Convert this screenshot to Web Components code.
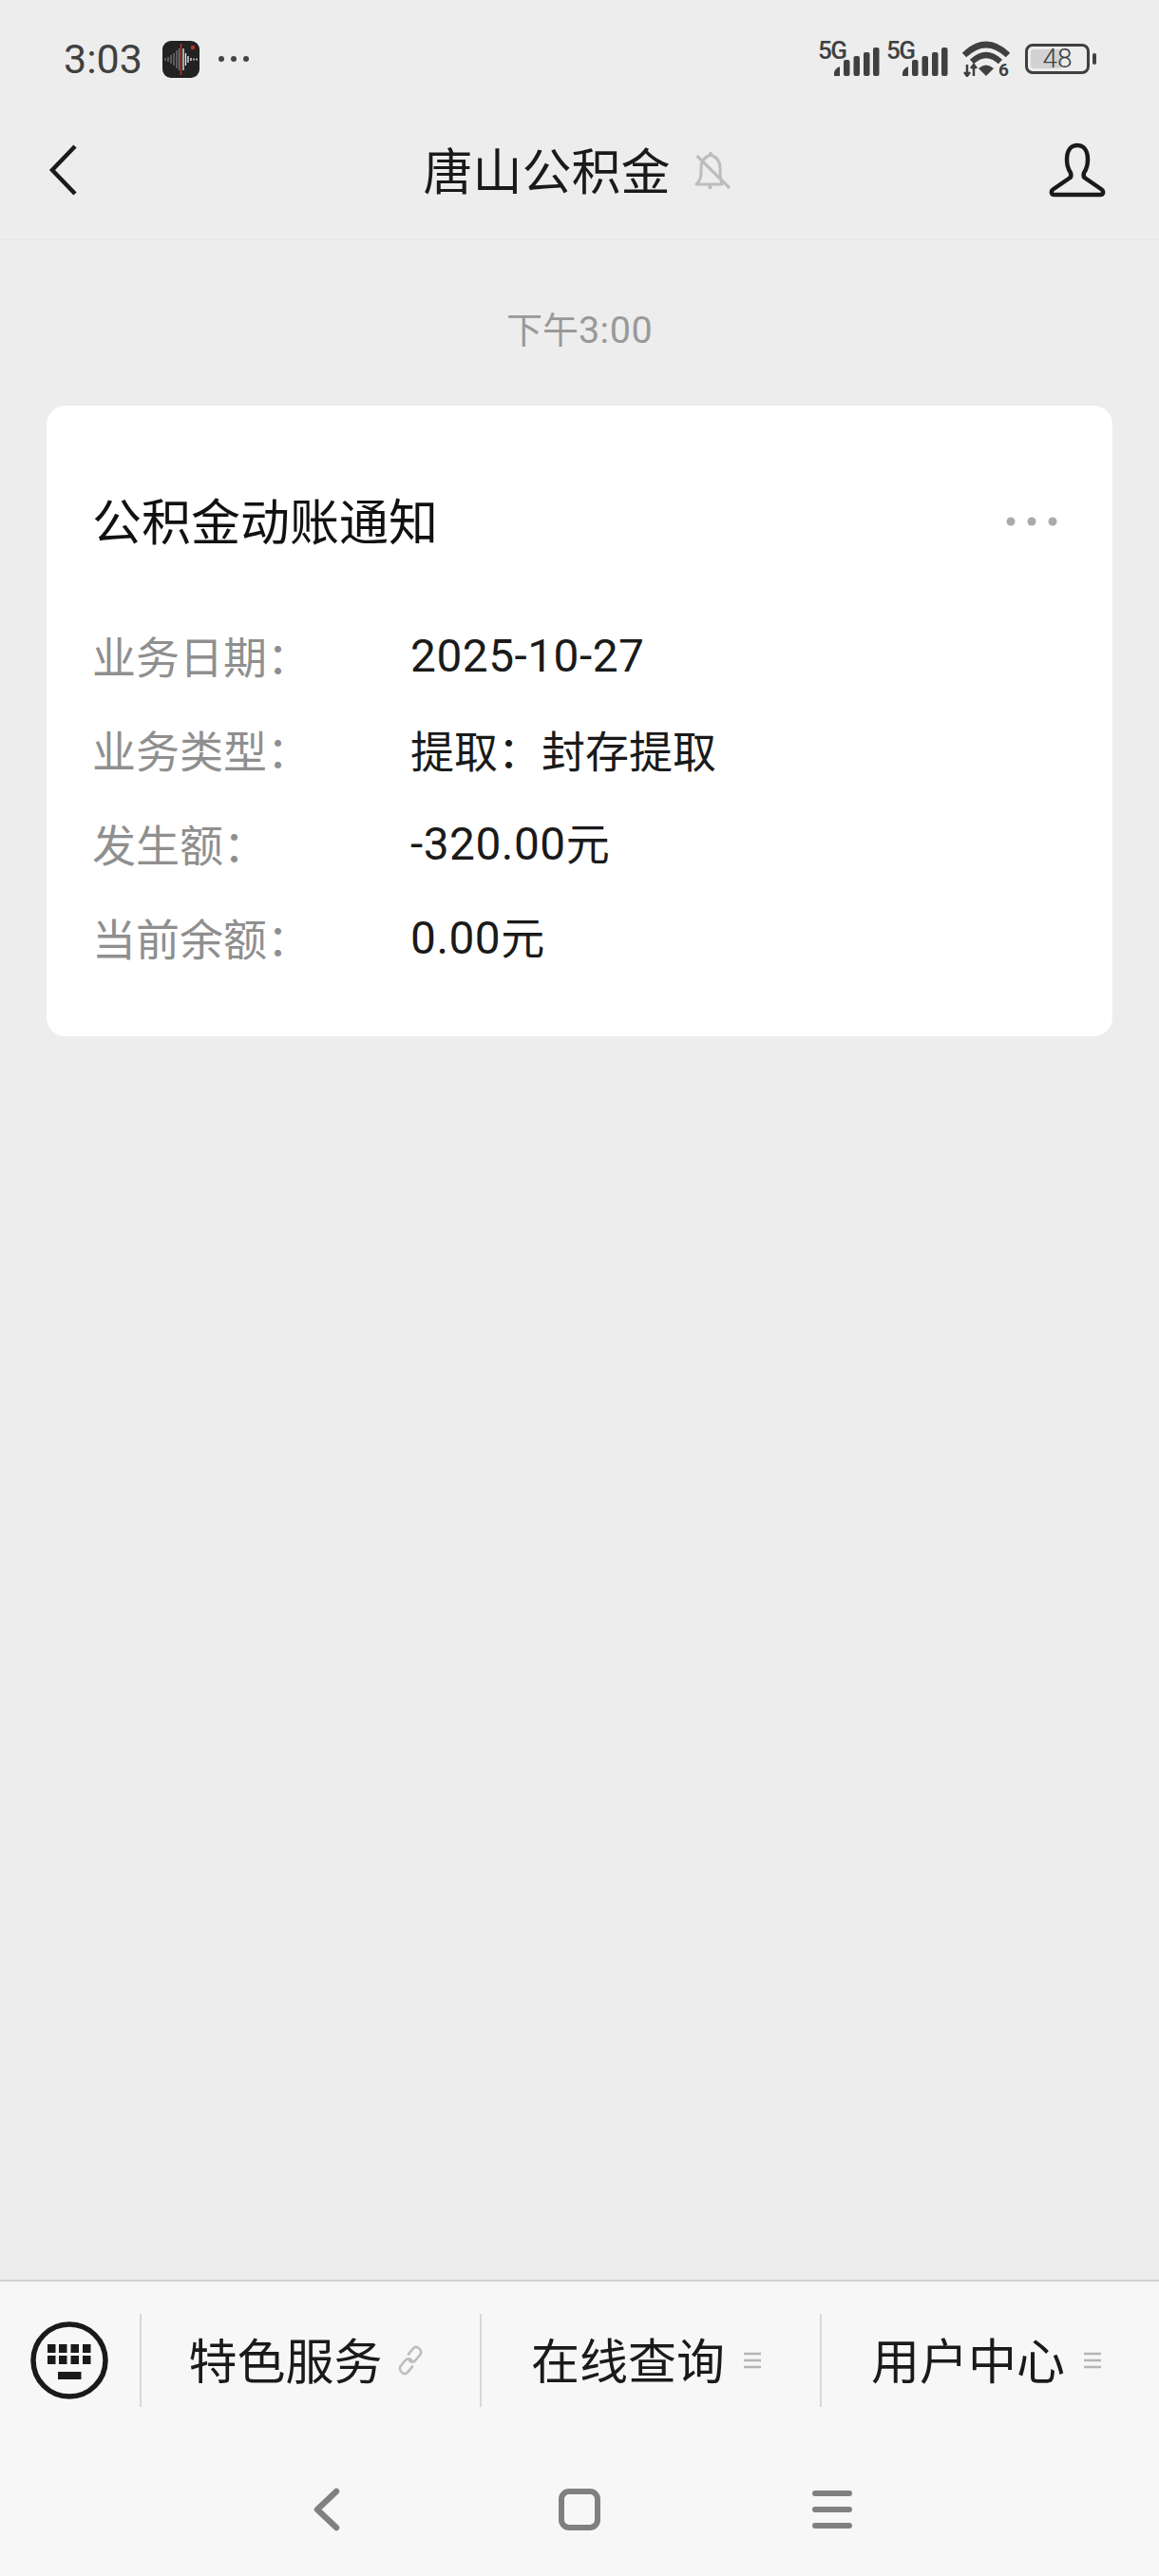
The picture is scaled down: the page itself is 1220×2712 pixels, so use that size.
<!DOCTYPE html>
<html lang="zh-CN">
<head>
<meta charset="utf-8">
<title>唐山公积金</title>
<style>
  html, body { margin: 0; padding: 0; }
  body {
    width: 1220px;
    height: 2712px;
    overflow: hidden;
    display: flex;
    flex-direction: column;
    background: #ededed;
    font-family: "Noto Sans CJK SC", sans-serif;
  }
</style>
</head>
<body>
  <phone-status-bar></phone-status-bar>
  <chat-header title="唐山公积金"></chat-header>
  <chat-thread>
    <chat-time>下午<num-text>3:00</num-text></chat-time>
    <notice-card heading="公积金动账通知">
      <notice-row label="业务日期："><num-text>2025-10-27</num-text></notice-row>
      <notice-row label="业务类型：">提取：封存提取</notice-row>
      <notice-row label="发生额："><num-text>-320.00</num-text>元</notice-row>
      <notice-row label="当前余额："><num-text>0.00</num-text>元</notice-row>
    </notice-card>
  </chat-thread>
  <menu-bar>
    <menu-tab icon="link">特色服务</menu-tab>
    <menu-tab icon="list">在线查询</menu-tab>
    <menu-tab icon="list">用户中心</menu-tab>
  </menu-bar>
  <system-nav></system-nav>

<script>
const signalBars = `
  <svg width="49" height="30" viewBox="0 0 49 30" fill="#404040">
    <path d="M1 30v-3q0-4 6-7v10z"/>
    <rect x="11" y="13" width="6.500" height="17" rx="2"/>
    <rect x="21.500" y="9" width="6.500" height="21" rx="2"/>
    <rect x="32" y="5" width="6.500" height="25" rx="2"/>
    <rect x="42" y="0" width="6.500" height="30" rx="2"/>
  </svg>`;

const statusTemplate = document.createElement("template");
statusTemplate.innerHTML = `
  <style>
    :host {
      display: flex;
      justify-content: space-between;
      align-items: center;
      height: 124px;
      margin-bottom: -18px;
      box-sizing: border-box;
      padding: 0 66px 0 67px;
      color: #404040;
      font-family: Roboto, sans-serif;
    }
    .left, .right { display: flex; align-items: center; }
    .time { font-size: 43px; line-height: 50px; }
    .app { margin-left: 21px; display: block; }
    .more { margin-left: 20px; display: block; }
    .signal { position: relative; width: 65px; height: 36px; margin-right: 7px; }
    .signal b { position: absolute; left: 0; top: -1px; font-size: 26px; line-height: 20px; font-weight: 500; letter-spacing: -1.500px; }
    .signal svg { position: absolute; right: 0; bottom: 0; }
    .wifi { position: relative; width: 50px; height: 38px; margin: 0 16px 0 8px; }
    .wifi svg { display: block; }
    .wifi i { position: absolute; right: 1px; bottom: -2px; font: 700 19px/18px Roboto, sans-serif; }
    .battery { display: flex; align-items: center; }
    .shell {
      position: relative;
      width: 68px;
      height: 32px;
      box-sizing: border-box;
      border: 3px solid #404040;
      border-radius: 8px;
      overflow: hidden;
      text-align: center;
    }
    .shell::before { content: ""; position: absolute; left: 3px; top: 3px; bottom: 3px; width: 33px; background: #d2d2d2; border-radius: 3px; }
    .shell span { position: relative; font-size: 28px; line-height: 26px; font-weight: 300; display: block; }
    .nub { width: 4px; height: 12px; margin-left: 3px; background: #404040; border-radius: 2px; }
  </style>
  <div class="left">
    <span class="time">3:03</span>
    <svg class="app" width="39" height="39" viewBox="0 0 39 39">
      <rect width="39" height="39" rx="9" fill="#222"/>
      <path d="M3 18v3M6 17v5M9 15v9M12 13v13M15 10v19M17.500 8v23" stroke="#8a8a8a" stroke-width="1.100"/>
      <path d="M22 8v23M24.500 13v13M27 16v7M30 18v3M33 18.500v2M36 18.500v2" stroke="#eee" stroke-width="1.300"/>
      <path d="M19.500 3v33" stroke="#b03a30" stroke-width="1.500"/>
      <circle cx="32" cy="7" r="2.200" fill="#b03a30"/>
    </svg>
    <svg class="more" width="32" height="6" viewBox="0 0 32 6" fill="#444">
      <circle cx="3" cy="3" r="3"/><circle cx="16" cy="3" r="3"/><circle cx="29" cy="3" r="3"/>
    </svg>
  </div>
  <div class="right">
    <div class="signal"><b>5G</b>${signalBars}</div>
    <div class="signal"><b>5G</b>${signalBars}</div>
    <div class="wifi">
      <svg width="50" height="38" viewBox="0 0 50 38" fill="none" stroke="#404040">
        <path d="M2 15Q25 -7 48 15" stroke-width="6.500"/>
        <path d="M10 22Q25 8 40 22" stroke-width="6"/>
        <path d="M17 29Q25 22 33 29L25 37Z" fill="#404040" stroke="none"/>
        <path d="M5 25v12M2 33l3 4 3-4M12 37v-12M9 29l3-4 3 4" stroke-width="2.500"/>
      </svg>
      <i>6</i>
    </div>
    <div class="battery">
      <div class="shell"><span>48</span></div>
      <div class="nub"></div>
    </div>
  </div>
`;

class PhoneStatusBar extends HTMLElement {
  constructor() {
    super();
    this.attachShadow({ mode: "open" });
    this.shadowRoot.appendChild(statusTemplate.content.cloneNode(true));
  }
}
customElements.define("phone-status-bar", PhoneStatusBar);

const headerTemplate = document.createElement("template");
headerTemplate.innerHTML = `
  <style>
    :host {
      display: flex;
      align-items: center;
      justify-content: space-between;
      height: 147px;
      box-sizing: border-box;
      padding: 0 56px 0 51px;
      border-bottom: 1px solid #e6e6e6;
      color: #1a1a1a;
    }
    .middle { display: flex; align-items: center; gap: 25px; margin-left: 27px; }
    .title { font-size: 52px; line-height: 70px; margin-top: -3px; }
    svg { display: block; }
  </style>
  <svg width="32" height="54" viewBox="0 0 32 54" fill="none" stroke="#1a1a1a" stroke-width="4.500">
    <path d="M28 2L4 27l24 25"/>
  </svg>
  <div class="middle">
    <span class="title"></span>
    <svg width="38" height="42" viewBox="0 0 38 42" fill="none" stroke="#bdbdbd" stroke-width="3" stroke-linejoin="round">
      <path d="M2 36c3-3 5-7 5-12v-5c0-7 4-12 10-14 6 2 10 7 10 14v5c0 5 1 9 2 12z"/>
      <path d="M2.500 6L37 40" stroke-width="3.200"/>
      <circle cx="17" cy="3.500" r="1.800" fill="#bdbdbd" stroke="none"/>
      <circle cx="16.500" cy="39" r="2.200" fill="#bdbdbd" stroke="none"/>
    </svg>
  </div>
  <svg width="60" height="58" viewBox="0 0 60 58" fill="none" stroke="#1a1a1a" stroke-width="4.500" stroke-linejoin="round">
    <path d="M30 3c-7 0-11 6-11 15 0 6 2 11 4 14 1 3 0 5-2 6L5 49c-3 2-3 6 1 6h48c4 0 4-4 1-6L39 38c-2-1-3-3-2-6 2-3 4-8 4-14 0-9-4-15-11-15z"/>
  </svg>
`;

class ChatHeader extends HTMLElement {
  constructor() {
    super();
    this.attachShadow({ mode: "open" });
    this.shadowRoot.appendChild(headerTemplate.content.cloneNode(true));
    this._title = this.shadowRoot.querySelector(".title");
  }

  connectedCallback() {
    this._title.textContent = this.getAttribute("title");
  }
}
customElements.define("chat-header", ChatHeader);

class ChatThread extends HTMLElement {
  constructor() {
    super();
    this.attachShadow({ mode: "open" });
    this.shadowRoot.innerHTML = `
      <style>
        :host { display: flex; flex-direction: column; flex: 1; padding: 67px 49px 0; }
      </style>
      <slot></slot>
    `;
  }
}
customElements.define("chat-thread", ChatThread);

class ChatTime extends HTMLElement {
  constructor() {
    super();
    this.attachShadow({ mode: "open" });
    this.shadowRoot.innerHTML = `
      <style>
        :host {
          display: block;
          height: 50px;
          margin-bottom: 57px;
          text-align: center;
          color: #999;
          font-size: 38px;
          line-height: 50px;
        }
      </style>
      <slot></slot>
    `;
  }
}
customElements.define("chat-time", ChatTime);

// digits in the reference are a different face from the CJK text around them
// host stays inline, so no whitespace around the slot here
class NumText extends HTMLElement {
  constructor() {
    super();
    this.attachShadow({ mode: "open" });
    this.shadowRoot.innerHTML = `<style>:host { font-family: Roboto, sans-serif; font-size: 1.04em; letter-spacing: 0.5px; }</style><slot></slot>`;
  }
}
customElements.define("num-text", NumText);

const cardTemplate = document.createElement("template");
cardTemplate.innerHTML = `
  <style>
    :host {
      display: block;
      height: 664px;
      box-sizing: border-box;
      padding: 90px 49px 0 48px;
      background: #fff;
      border-radius: 20px;
    }
    header {
      display: flex;
      align-items: center;
      justify-content: space-between;
      height: 60px;
      margin-bottom: 62px;
      padding-right: 9px;
    }
    .heading { font-size: 52px; line-height: 60px; color: #111; }
    svg { display: block; margin-top: 4px; }
  </style>
  <header>
    <span class="heading"></span>
    <svg width="54" height="10" viewBox="0 0 54 10" fill="#aaa">
      <circle cx="5" cy="5" r="4.500"/><circle cx="27" cy="5" r="4.500"/><circle cx="49" cy="5" r="4.500"/>
    </svg>
  </header>
  <slot></slot>
`;

class NoticeCard extends HTMLElement {
  constructor() {
    super();
    this.attachShadow({ mode: "open" });
    this.shadowRoot.appendChild(cardTemplate.content.cloneNode(true));
    this._heading = this.shadowRoot.querySelector(".heading");
  }

  connectedCallback() {
    this._heading.textContent = this.getAttribute("heading");
  }
}
customElements.define("notice-card", NoticeCard);

const rowTemplate = document.createElement("template");
rowTemplate.innerHTML = `
  <style>
    :host {
      display: grid;
      grid-template-columns: 335px 1fr;
      align-items: center;
      height: 99px;
      font-size: 46px;
      line-height: 60px;
      color: #1a1a1a;
    }
    .label { color: #8f8f8f; }
  </style>
  <span class="label"></span>
  <span class="value"><slot></slot></span>
`;

class NoticeRow extends HTMLElement {
  constructor() {
    super();
    this.attachShadow({ mode: "open" });
    this.shadowRoot.appendChild(rowTemplate.content.cloneNode(true));
    this._label = this.shadowRoot.querySelector(".label");
  }

  connectedCallback() {
    this._label.textContent = this.getAttribute("label");
  }
}
customElements.define("notice-row", NoticeRow);

class MenuBar extends HTMLElement {
  constructor() {
    super();
    this.attachShadow({ mode: "open" });
    this.shadowRoot.innerHTML = `
      <style>
        :host {
          display: grid;
          grid-template-columns: 147px repeat(3, 358px);
          height: 171px;
          box-sizing: border-box;
          padding-top: 34px;
          align-items: start;
          background: #f7f7f7;
          border-top: 2px solid #d0d0d0;
        }
        .keyboard { display: flex; justify-content: center; align-items: center; height: 98px; padding-right: 2px; }
        svg { display: block; }
      </style>
      <div class="keyboard">
        <svg width="82" height="82" viewBox="0 0 82 82">
          <circle cx="41" cy="41" r="38" fill="none" stroke="#1a1a1a" stroke-width="5.500"/>
          <g fill="#1a1a1a">
            <rect x="18" y="24" width="8.500" height="9"/><rect x="30" y="24" width="8.500" height="9"/><rect x="42.500" y="24" width="8.500" height="9"/><rect x="55" y="24" width="8.500" height="9"/>
            <rect x="18" y="36" width="8.500" height="9"/><rect x="30" y="36" width="8.500" height="9"/><rect x="42.500" y="36" width="8.500" height="9"/><rect x="55" y="36" width="8.500" height="9"/>
            <rect x="29" y="53" width="24.500" height="8"/>
          </g>
        </svg>
      </div>
      <slot></slot>
    `;
  }
}
customElements.define("menu-bar", MenuBar);

const menuIcons = {
  link: `<svg width="32" height="32" viewBox="0 0 30 30" fill="none" stroke="#bdbdbd" stroke-width="2.400" stroke-linecap="round">
    <path d="M13 9l5-6c3-3 9 1 7 6l-5 6c-2 2-5 2-6 0"/>
    <path d="M17 21l-5 6c-3 3-9-1-7-6l5-6c2-2 5-2 6 0"/>
  </svg>`,
  list: `<svg width="18" height="18" viewBox="0 0 18 18" fill="none" stroke="#b5b5b5" stroke-width="2.400">
    <path d="M0 2h18M0 9h18M0 16h18"/>
  </svg>`,
};

class MenuTab extends HTMLElement {
  constructor() {
    super();
    this.attachShadow({ mode: "open" });
    this.shadowRoot.innerHTML = `
      <style>
        :host {
          display: flex;
          align-items: center;
          justify-content: center;
          height: 98px;
          box-sizing: border-box;
          padding-right: 8px;
          border-left: 2px solid #d8d8d8;
          color: #1a1a1a;
          font-size: 51px;
          line-height: 70px;
        }
        :host([icon="list"]) { padding-right: 10px; }
        .text { margin-top: -5px; }
        .icon { display: flex; margin-left: 13px; }
        :host([icon="list"]) .icon { margin-left: 20px; }
      </style>
      <span class="text"><slot></slot></span>
      <span class="icon"></span>
    `;
  }

  connectedCallback() {
    this.shadowRoot.querySelector(".icon").innerHTML = menuIcons[this.getAttribute("icon")];
  }
}
customElements.define("menu-tab", MenuTab);

class SystemNav extends HTMLElement {
  constructor() {
    super();
    this.attachShadow({ mode: "open" });
    this.shadowRoot.innerHTML = `
      <style>
        :host {
          display: grid;
          grid-template-columns: repeat(3, 266px);
          justify-content: center;
          justify-items: center;
          align-items: center;
          height: 141px;
          box-sizing: border-box;
          background: #f7f7f7;
        }
        svg { display: block; }
      </style>
      <svg width="28" height="46" viewBox="0 0 28 46" fill="none" stroke="#808080" stroke-width="6.500" stroke-linecap="round" stroke-linejoin="round">
        <path d="M24 4L4 23l20 19"/>
      </svg>
      <svg width="44" height="44" viewBox="0 0 44 44" fill="none" stroke="#808080" stroke-width="6">
        <rect x="3" y="3" width="38" height="38" rx="8"/>
      </svg>
      <svg width="42" height="40" viewBox="0 0 42 40" fill="none" stroke="#808080" stroke-width="6" stroke-linecap="round">
        <path d="M3 3h36M3 20h36M3 37h36"/>
      </svg>
    `;
  }
}
customElements.define("system-nav", SystemNav);
</script>
</body>
</html>
